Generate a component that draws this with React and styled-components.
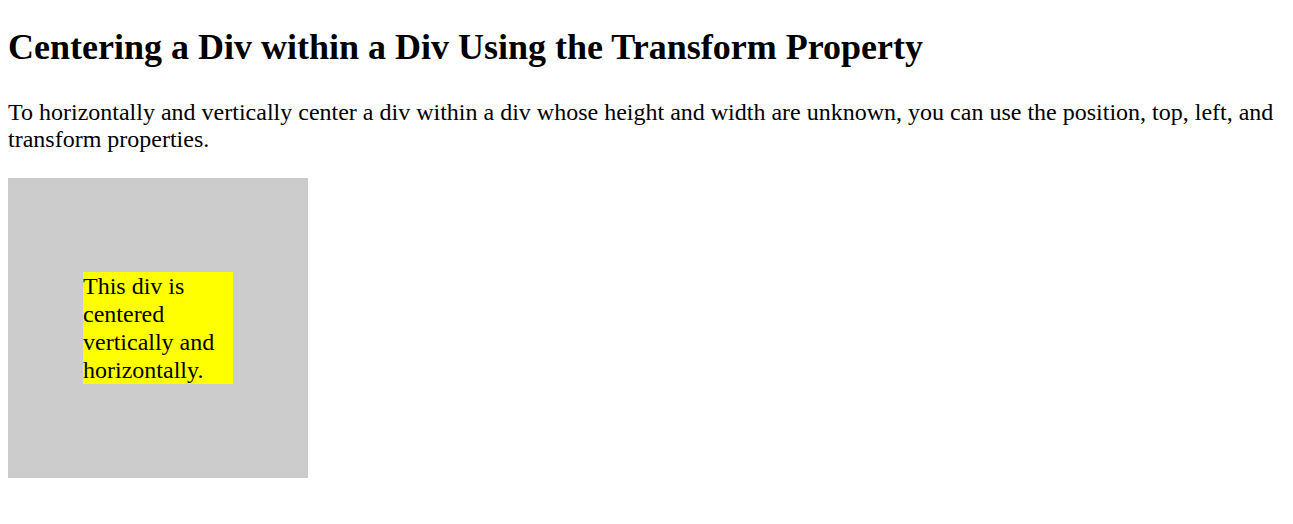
import React from "react";
import styled, { createGlobalStyle } from "styled-components";

const GlobalStyle = createGlobalStyle`
  body {
    margin: 8px;
    background: #fff;
    color: #000;
    font-family: "Liberation Serif", "Times New Roman", serif;
    font-size: 24px;
  }
`;

const Title = styled.h1`
  font-size: 36px;
  font-weight: bold;
  margin: 18px 0 31px;
`;

const Text = styled.p`
  margin: 0 0 25px;
`;

const Outer = styled.div`
  position: relative;
  width: 300px;
  height: 300px;
  background-color: #ccc;
`;

const Inner = styled.div`
  position: absolute;
  top: 50%;
  left: 50%;
  transform: translate(-50%, -50%);
  width: 150px;
  line-height: 28px;
  background-color: yellow;
`;

const App = () => {
  return (
    <>
      <GlobalStyle />
      <Title>Centering a Div within a Div Using the Transform Property</Title>
      <Text>
        To horizontally and vertically center a div within a div whose height
        and width are unknown, you can use the position, top, left, and
        transform properties.
      </Text>
      <Outer>
        <Inner>This div is centered vertically and horizontally.</Inner>
      </Outer>
    </>
  );
};

export default App;
